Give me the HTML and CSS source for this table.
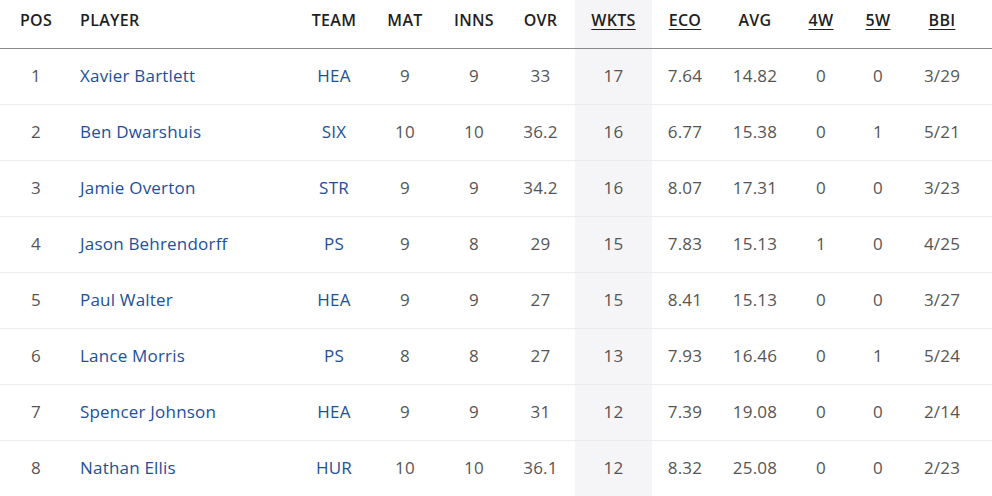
FILE: index.html
```
<!DOCTYPE html>
<html>
<head>
<meta charset="utf-8">
<link rel="stylesheet" href="styles.css">
</head>
<body>
<table class="stats">
  <colgroup>
    <col class="c-pos"><col class="c-player"><col class="c-team"><col class="c-mat"><col class="c-inns"><col class="c-ovr"><col class="c-wkts"><col class="c-eco"><col class="c-avg"><col class="c-4w"><col class="c-5w"><col class="c-bbi"><col>
  </colgroup>
  <thead>
    <tr>
      <th>POS</th><th class="left">PLAYER</th><th>TEAM</th><th>MAT</th><th>INNS</th><th>OVR</th>
      <th class="hl"><span class="u">WKTS</span></th><th><span class="u">ECO</span></th><th>AVG</th><th><span class="u">4W</span></th><th><span class="u">5W</span></th><th><span class="u">BBI</span></th><th></th>
    </tr>
  </thead>
  <tbody>
    <tr><td>1</td><td class="left link">Xavier Bartlett</td><td class="link">HEA</td><td>9</td><td>9</td><td>33</td><td class="hl">17</td><td>7.64</td><td>14.82</td><td>0</td><td>0</td><td>3/29</td><td></td></tr>
    <tr><td>2</td><td class="left link">Ben Dwarshuis</td><td class="link">SIX</td><td>10</td><td>10</td><td>36.2</td><td class="hl">16</td><td>6.77</td><td>15.38</td><td>0</td><td>1</td><td>5/21</td><td></td></tr>
    <tr><td>3</td><td class="left link">Jamie Overton</td><td class="link">STR</td><td>9</td><td>9</td><td>34.2</td><td class="hl">16</td><td>8.07</td><td>17.31</td><td>0</td><td>0</td><td>3/23</td><td></td></tr>
    <tr><td>4</td><td class="left link">Jason Behrendorff</td><td class="link">PS</td><td>9</td><td>8</td><td>29</td><td class="hl">15</td><td>7.83</td><td>15.13</td><td>1</td><td>0</td><td>4/25</td><td></td></tr>
    <tr><td>5</td><td class="left link">Paul Walter</td><td class="link">HEA</td><td>9</td><td>9</td><td>27</td><td class="hl">15</td><td>8.41</td><td>15.13</td><td>0</td><td>0</td><td>3/27</td><td></td></tr>
    <tr><td>6</td><td class="left link">Lance Morris</td><td class="link">PS</td><td>8</td><td>8</td><td>27</td><td class="hl">13</td><td>7.93</td><td>16.46</td><td>0</td><td>1</td><td>5/24</td><td></td></tr>
    <tr><td>7</td><td class="left link">Spencer Johnson</td><td class="link">HEA</td><td>9</td><td>9</td><td>31</td><td class="hl">12</td><td>7.39</td><td>19.08</td><td>0</td><td>0</td><td>2/14</td><td></td></tr>
    <tr><td>8</td><td class="left link">Nathan Ellis</td><td class="link">HUR</td><td>10</td><td>10</td><td>36.1</td><td class="hl">12</td><td>8.32</td><td>25.08</td><td>0</td><td>0</td><td>2/23</td><td></td></tr>
  </tbody>
</table>
</body>
</html>
```
FILE: styles.css
```
html, body {
  margin: 0;
  padding: 0;
  background: #fff;
}
body {
  font-family: "Open Sans", "Liberation Sans", sans-serif;
  width: 992px;
  overflow: hidden;
}
.stats {
  width: 992px;
  border-collapse: collapse;
  table-layout: fixed;
}
.c-pos { width: 72px; }
.c-player { width: 228px; }
.c-team { width: 68px; }
.c-mat { width: 74px; }
.c-inns { width: 64px; }
.c-ovr { width: 69px; }
.c-wkts { width: 77px; }
.c-eco { width: 66px; }
.c-avg { width: 74px; }
.c-4w { width: 58px; }
.c-5w { width: 56px; }
.c-bbi { width: 72px; }

.stats th {
  height: 48px;
  padding: 0 0 8px;
  box-sizing: border-box;
  font-size: 16px;
  font-weight: 600;
  color: #1f1f1f;
  text-align: center;
  vertical-align: middle;
  border-bottom: 1px solid #8a8a8a;
  letter-spacing: 0.3px;
}
.stats td {
  height: 56px;
  padding: 0 0 2px;
  box-sizing: border-box;
  font-size: 17px;
  letter-spacing: 0.2px;
  color: #555;
  text-align: center;
  vertical-align: middle;
  border-bottom: 1px solid #ececec;
}
.stats tbody tr:last-child td { border-bottom: none; }
.stats .left { text-align: left; padding-left: 8px; }
.stats .link { color: #1d4f9a; }
.stats .hl { background: #f5f5f7; }
.u { text-decoration: underline; text-underline-offset: 3px; }
```
